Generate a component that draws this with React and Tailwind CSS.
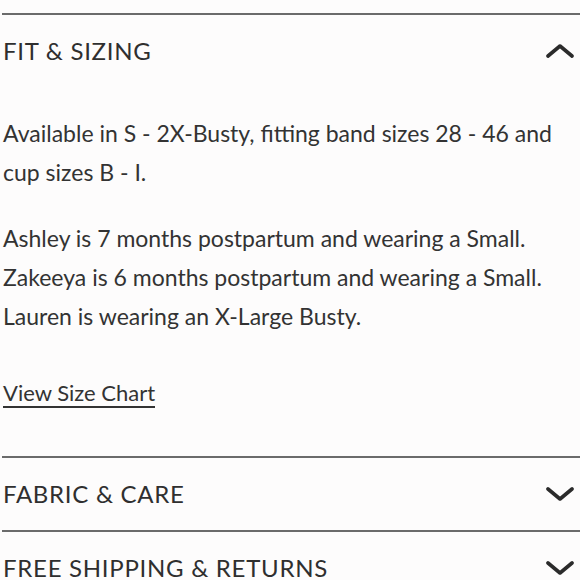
import React from "react";

function Chevron({ up }) {
  return (
    <svg width="28" height="16" viewBox="0 0 28 16" className="shrink-0">
      <polyline
        points={up ? "2,13 14,3 26,13" : "2,3 14,13 26,3"}
        fill="none"
        stroke="#2b2b2b"
        strokeWidth="3.6"
        strokeLinecap="round"
        strokeLinejoin="round"
      />
    </svg>
  );
}

function Header({ title, up }) {
  return (
    <div className="flex items-center justify-between h-[72px] pl-[1px] pr-[6px]">
      <span className="text-[24px] leading-none tracking-[0.03em] text-[#2f2f2f]">{title}</span>
      <Chevron up={up} />
    </div>
  );
}

export default function App() {
  return (
    <div
      className="w-full h-[580px] overflow-hidden bg-[#fdfcfc] pt-[13px] text-[#333]"
      style={{ fontFamily: "Lato, 'Open Sans', sans-serif" }}
    >
      <section className="ml-[2px] border-t-2 border-[#6b6b6b]">
        <Header title="FIT & SIZING" up />
        <div className="pl-[1px] pt-[27px] pb-[44px] text-[23px] leading-[39px] text-[#333]">
          <p>Available in S - 2X-Busty, fitting band sizes 28 - 46 and cup sizes B - I.</p>
          <p className="mt-[27px]">
            Ashley is 7 months postpartum and wearing a Small.
            <br />
            Zakeeya is 6 months postpartum and wearing a Small.
            <br />
            Lauren is wearing an X-Large Busty.
          </p>
          <a className="inline-block mt-[44px] text-[22px] leading-[26px] border-b-2 border-[#333]">
            View Size Chart
          </a>
        </div>
      </section>
      <section className="ml-[2px] border-t-2 border-[#6b6b6b]">
        <Header title="FABRIC & CARE" />
      </section>
      <section className="ml-[2px] border-t-2 border-[#6b6b6b]">
        <Header title="FREE SHIPPING & RETURNS" />
      </section>
    </div>
  );
}
